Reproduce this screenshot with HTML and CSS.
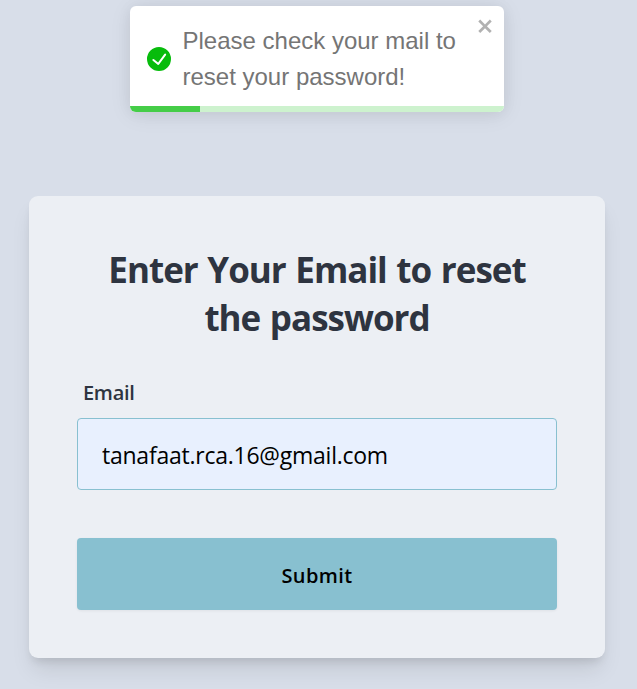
FILE: index.html
```
<!DOCTYPE html>
<html lang="en">
<head>
<meta charset="utf-8">
<title>Reset password</title>
<link rel="stylesheet" href="styles.css">
</head>
<body>
<div class="toast" role="alert">
  <div class="toast-body">
    <svg class="toast-icon" viewBox="0 0 24 24" aria-hidden="true"><path fill="#07bc0c" d="M12 0a12 12 0 1012 12A12.014 12.014 0 0012 0zm6.927 8.2l-6.845 9.289a1.011 1.011 0 01-1.43.188l-4.888-3.908a1 1 0 111.25-1.562l4.076 3.261 6.227-8.451a1 1 0 111.61 1.183z"/></svg>
    <div class="toast-text">Please check your mail to<br>reset your password!</div>
  </div>
  <button class="toast-close" aria-label="close"><svg viewBox="0 0 14 16" aria-hidden="true"><path fill-rule="evenodd" d="M7.71 8.23l3.75 3.75-1.48 1.48-3.75-3.75-3.75 3.75L1 11.98l3.75-3.75L1 4.48 2.48 3l3.75 3.75L9.98 3l1.48 1.48-3.75 3.75z"/></svg></button>
  <div class="toast-track"><div class="toast-progress"></div></div>
</div>
<main class="card">
  <h1 class="title">Enter Your Email to reset<br>the password</h1>
  <form class="form">
    <label class="label" for="email">Email</label>
    <input class="input" id="email" type="text" value="tanafaat.rca.16@gmail.com">
    <button class="submit" type="button">Submit</button>
  </form>
</main>
</body>
</html>
```
FILE: styles.css
```
* { box-sizing: border-box; }
body {
  margin: 0;
  height: 689px;
  overflow: hidden;
  padding: 196px 32px 0 29px;
  background: #d8dee9;
  font-family: "Open Sans", "Noto Sans", sans-serif;
  color: #2e3440;
}
.toast {
  position: absolute;
  left: 130px;
  top: 6px;
  width: 374px;
  height: 106px;
  border-radius: 6px;
  overflow: hidden;
  background: #fff;
  color: #757575;
  font: 24px/36px "Liberation Sans", Arial, sans-serif;
  box-shadow: 0 1px 15px rgba(0, 0, 0, .05), 0 3px 22px rgba(0, 0, 0, .08);
}
.toast-body {
  display: flex;
  align-items: center;
  gap: 11.5px;
  height: 106px;
  padding-left: 17px;
}
.toast-icon { width: 24px; height: 24px; flex: none; }
.toast-text { white-space: nowrap; }
.toast-close {
  position: absolute;
  top: 7.5px;
  right: 9px;
  padding: 0;
  border: 0;
  background: none;
  line-height: 0;
}
.toast-close svg { width: 18px; height: 24px; fill: #000; opacity: .3; }
.toast-track {
  position: absolute;
  left: 0;
  bottom: 0;
  width: 100%;
  height: 6px;
  background: #cdf2ce;
}
.toast-progress { width: 70px; height: 6px; background: #45cd48; }
.card {
  height: 462px;
  padding: 50px 48px 48px;
  border-radius: 9px;
  background: #eceff4;
  box-shadow: 0 15px 22px -4px rgba(0, 0, 0, .1), 0 6px 9px -3px rgba(0, 0, 0, .1);
}
.title {
  margin: 0;
  font-size: 35px;
  line-height: 48px;
  font-weight: 700;
  letter-spacing: -1px;
  word-spacing: 1.5px;
  text-align: center;
  white-space: nowrap;
}
.form { display: flex; flex-direction: column; }
.label {
  margin: 35px 0 9px 6px;
  font-size: 20px;
  line-height: 32px;
  font-weight: 600;
  letter-spacing: -.3px;
}
.input {
  height: 72px;
  padding: 2px 24px 0;
  border: 1px solid #88c0d0;
  border-radius: 4px;
  background: #e8f0fe;
  color: #000;
  font: 400 23px "Open Sans", "Noto Sans", sans-serif;
  letter-spacing: -.24px;
  outline: none;
}
.submit {
  height: 72px;
  margin-top: 48px;
  padding: 2px 0 0;
  border: 0;
  border-radius: 4px;
  background: #88c0d0;
  color: #000;
  font: 600 20px "Open Sans", "Noto Sans", sans-serif;
  letter-spacing: .4px;
  box-shadow: 0 1px 3px rgba(0, 0, 0, .06);
}
```
